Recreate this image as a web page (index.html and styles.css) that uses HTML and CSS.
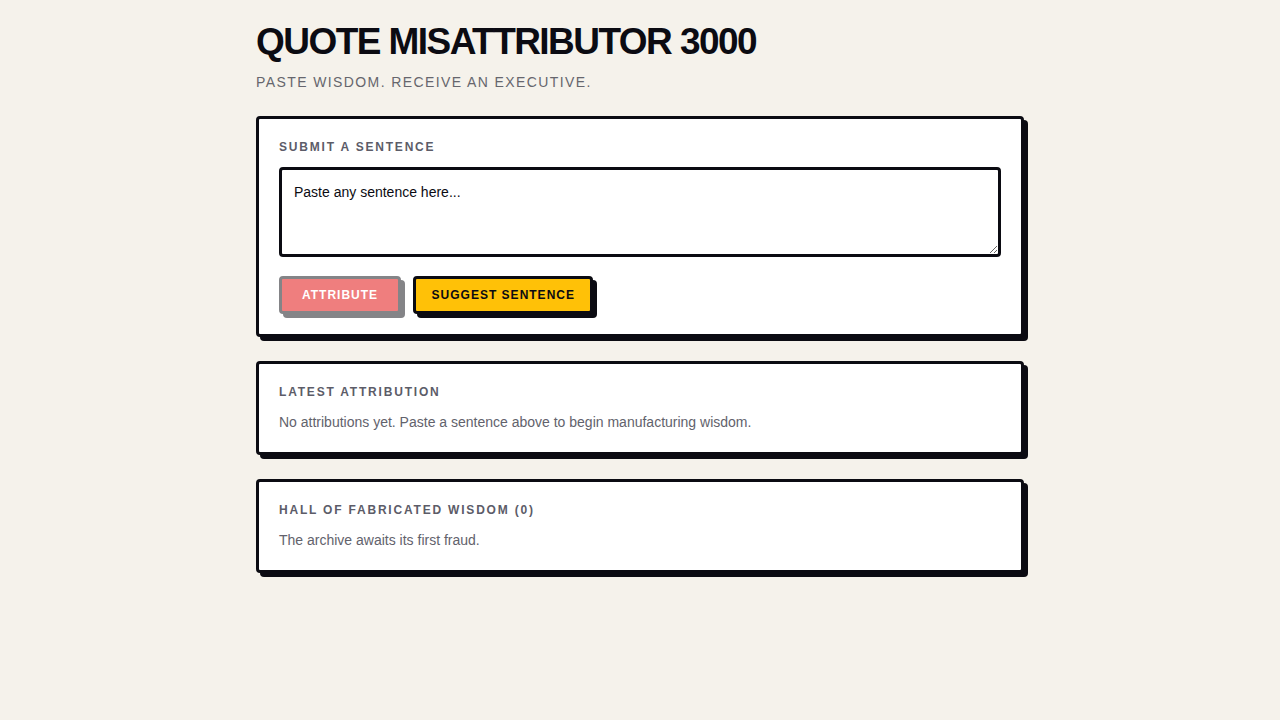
FILE: index.html
```html
<!DOCTYPE html>
<html lang="en">
<head>
<meta charset="utf-8">
<title>Quote Misattributor 3000</title>
<link rel="stylesheet" href="styles.css">
</head>
<body>
<main class="page">
  <header class="header">
    <h1 class="title">QUOTE MISATTRIBUTOR 3000</h1>
    <p class="subtitle">PASTE WISDOM. RECEIVE AN EXECUTIVE.</p>
  </header>

  <section class="card">
    <h2 class="label">SUBMIT A SENTENCE</h2>
    <textarea class="input" placeholder="Paste any sentence here..."></textarea>
    <div class="actions">
      <button class="btn btn-attr" disabled>ATTRIBUTE</button>
      <button class="btn btn-suggest">SUGGEST SENTENCE</button>
    </div>
  </section>

  <section class="card">
    <h2 class="label">LATEST ATTRIBUTION</h2>
    <p class="text">No attributions yet. Paste a sentence above to begin manufacturing wisdom.</p>
  </section>

  <section class="card">
    <h2 class="label">HALL OF FABRICATED WISDOM (0)</h2>
    <p class="text">The archive awaits its first fraud.</p>
  </section>
</main>
</body>
</html>
```

FILE: styles.css
```css
* { box-sizing: border-box; }
html, body { margin: 0; padding: 0; }
body {
  background: #f5f2eb;
  font-family: "Liberation Sans", Arial, sans-serif;
  color: #0b0b12;
}
.page {
  width: 768px;
  margin: 0 auto;
  padding-top: 20px;
}
.header { margin-bottom: 25px; }
.title {
  margin: 0;
  font-size: 37px;
  font-weight: 700;
  letter-spacing: -1.55px;
  line-height: 44px;
  color: #0b0b12;
}
.subtitle {
  margin: 9px 0 0;
  font-size: 14px;
  line-height: 18px;
  letter-spacing: 1.4px;
  color: #66666d;
}
.card {
  background: #ffffff;
  border: 3px solid #0b0b12;
  border-radius: 4px;
  box-shadow: 4px 4px 0 #0b0b12;
  padding: 20px 20px 20px;
  margin-bottom: 24px;
}
.label {
  margin: 0 0 12px;
  font-size: 12px;
  line-height: 16px;
  font-weight: 700;
  letter-spacing: 1.8px;
  color: #5c5c68;
}
.input {
  display: block;
  width: 100%;
  height: 90px;
  border: 3px solid #0b0b12;
  border-radius: 4px;
  padding: 12px;
  font-family: "Liberation Sans", Arial, sans-serif;
  font-size: 14px;
  line-height: 20px;
  color: #0b0b12;
  background: #fff;
  resize: vertical;
  outline: none;
}
.input::placeholder { color: #0b0b12; opacity: 1; }
.actions {
  display: flex;
  gap: 12px;
  margin-top: 19px;
}
.btn {
  height: 38px;
  border: 3px solid #0b0b12;
  border-radius: 4px;
  box-shadow: 4px 4px 0 #0b0b12;
  font-family: "Liberation Sans", Arial, sans-serif;
  font-size: 12px;
  font-weight: 700;
  letter-spacing: 1px;
  cursor: pointer;
}
.btn-attr {
  background: #e10000;
  color: #fff;
  padding: 0 20px;
  opacity: 0.5;
}
.btn-suggest {
  background: #ffc107;
  color: #0b0b12;
  padding: 0 15.5px;
}
.text {
  margin: 0;
  font-size: 14px;
  line-height: 20px;
  color: #62626c;
}
```
